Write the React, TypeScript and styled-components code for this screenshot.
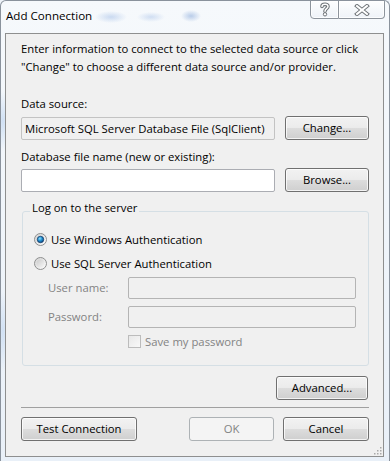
import styled, { createGlobalStyle } from "styled-components";

const GlobalStyle = createGlobalStyle`
  html, body {
    margin: 0;
    padding: 0;
    background: #eef3f9;
  }
  body {
    font-family: "Open Sans", "Noto Sans", sans-serif;
    font-size: 11.3px;
    color: #000;
  }
`;

const Frame = styled.div`
  width: 390px;
  height: 461px;
  box-sizing: border-box;
  overflow: hidden;
  border: 1px solid #8a929c;
  border-bottom: none;
  border-radius: 6px 6px 0 0;
  background:
    radial-gradient(ellipse 16px 6px at 110px 16px, rgba(120, 160, 220, 0.35), transparent),
    radial-gradient(ellipse 14px 5px at 150px 16px, rgba(120, 160, 220, 0.3), transparent),
    radial-gradient(ellipse 10px 6px at 190px 15px, rgba(110, 150, 210, 0.45), transparent),
    radial-gradient(ellipse 8px 30px at 2px 120px, rgba(140, 180, 230, 0.35), transparent),
    radial-gradient(ellipse 6px 40px at 2px 330px, rgba(140, 180, 230, 0.3), transparent),
    linear-gradient(#f6f9fc, #e9f0f8);
  display: flex;
  flex-direction: column;
`;

const TitleBar = styled.div`
  height: 32px;
  display: flex;
  align-items: flex-start;
  justify-content: space-between;
`;

const Title = styled.div`
  margin: 6px 0 0 5px;
  line-height: 18px;
  font-size: 11.6px;
  text-shadow: 0 0 6px #fff, 0 0 3px #fff;
`;

const CaptionButtons = styled.div`
  display: flex;
  margin: -1px 4px 0 0;
`;

const CaptionButton = styled.div<{ $wide?: boolean; $last?: boolean }>`
  width: ${(p) => (p.$wide ? 46 : 29)}px;
  height: 19px;
  box-sizing: border-box;
  border: 1px solid #8d949c;
  border-left: ${(p) => (p.$last ? "none" : "1px solid #8d949c")};
  border-radius: ${(p) => (p.$last ? "0 0 4px 0" : "0 0 0 4px")};
  background: linear-gradient(rgba(255, 255, 255, 0.85), rgba(235, 240, 246, 0.7));
  box-shadow: inset 0 0 0 1px rgba(255, 255, 255, 0.8);
  display: flex;
  align-items: center;
  justify-content: center;
`;

const Client = styled.div`
  position: relative;
  margin: 0 5px 0 4px;
  height: 424px;
  box-sizing: border-box;
  border: 1px solid #8e8f8f;
  background: #f0f0f0;
  padding: 6px 14px 0 15px;
  display: flex;
  flex-direction: column;
`;

const Text = styled.div<{ $top?: number; $muted?: boolean }>`
  line-height: 18px;
  margin-top: ${(p) => p.$top ?? 0}px;
  color: ${(p) => (p.$muted ? "#838383" : "#000")};
  white-space: nowrap;
`;

const FieldRow = styled.div<{ $top: number }>`
  display: flex;
  align-items: center;
  gap: 10px;
  margin-top: ${(p) => p.$top}px;
`;

const Field = styled.div<{ $variant?: "readonly" | "edit" | "disabled" }>`
  flex: 1;
  min-width: 0;
  height: ${(p) => (p.$variant === "disabled" ? 22 : 23)}px;
  box-sizing: border-box;
  border: 1px solid
    ${(p) => (p.$variant === "edit" ? "#abadb3" : p.$variant === "disabled" ? "#b4b4b4" : "#c3c3c3")};
  border-radius: 2px;
  background: ${(p) => (p.$variant === "edit" ? "#fff" : "#f0f0f0")};
  padding: 0 3px;
  line-height: 21px;
  white-space: nowrap;
  overflow: hidden;
`;

const Button = styled.div<{ $width: number; $disabled?: boolean }>`
  width: ${(p) => p.$width}px;
  height: 24px;
  box-sizing: border-box;
  flex: none;
  border: 1px solid ${(p) => (p.$disabled ? "#adb2b5" : "#707070")};
  border-radius: 3px;
  background: ${(p) =>
    p.$disabled
      ? "#f4f4f4"
      : "linear-gradient(#f2f2f2 0%, #ebebeb 50%, #dddddd 50%, #cfcfcf 100%)"};
  box-shadow: inset 0 0 0 1px ${(p) => (p.$disabled ? "#f4f4f4" : "rgba(255,255,255,0.75)")};
  color: ${(p) => (p.$disabled ? "#838383" : "#000")};
  display: flex;
  align-items: center;
  justify-content: center;
  line-height: 18px;
`;

const Group = styled.div`
  margin-top: 19px;
  margin-left: 1px;
  border: 1px solid #d5dfe5;
  border-radius: 3px;
  padding: 0 12px 15px 11px;
  display: flex;
  flex-direction: column;
`;

const GroupTitle = styled.div`
  align-self: flex-start;
  margin: -13px 0 0 -4px;
  padding: 0 2px;
  line-height: 18px;
  background: #f0f0f0;
`;

const OptionRow = styled.div<{ $top: number; $indent?: number; $muted?: boolean }>`
  display: flex;
  align-items: center;
  gap: 4px;
  height: 18px;
  margin-top: ${(p) => p.$top}px;
  margin-left: ${(p) => p.$indent ?? 0}px;
  color: ${(p) => (p.$muted ? "#838383" : "#000")};
`;

const CredRow = styled.div<{ $top: number }>`
  display: flex;
  align-items: center;
  margin-top: ${(p) => p.$top}px;
  margin-left: 14px;
  color: #838383;
`;

const CredLabel = styled.div`
  width: 80px;
  flex: none;
  line-height: 18px;
`;

const RightRow = styled.div<{ $top: number }>`
  display: flex;
  justify-content: flex-end;
  margin-top: ${(p) => p.$top}px;
  padding-right: 1px;
`;

const Separator = styled.div`
  margin-top: 7px;
  height: 1px;
  background: #a0a0a0;
`;

const ButtonBar = styled.div`
  display: flex;
  align-items: center;
  margin-top: 9px;
  gap: 9px;
`;

const Spacer = styled.div`
  flex: 1;
`;

const Grip = styled.svg`
  position: absolute;
  right: 1px;
  bottom: 1px;
`;

const HelpGlyph = () => (
  <svg width="12" height="15" viewBox="0 0 12 15">
    <g fill="none" strokeLinecap="round" strokeLinejoin="round">
      <path d="M3 4.5 C3 1.6 9 1.6 9 4.5 C9 6.6 6 6.8 6 9.2" stroke="#6f7478" strokeWidth="3.6" />
      <path d="M3 4.5 C3 1.6 9 1.6 9 4.5 C9 6.6 6 6.8 6 9.2" stroke="#fff" strokeWidth="1.5" />
    </g>
    <circle cx="6" cy="12.3" r="1.7" fill="#fff" stroke="#6f7478" strokeWidth="1" />
  </svg>
);

const CloseGlyph = () => (
  <svg width="16" height="12" viewBox="0 0 16 12">
    <g strokeLinecap="square">
      <path d="M3 2 L13 10 M13 2 L3 10" stroke="#6f7478" strokeWidth="4" />
      <path d="M3 2 L13 10 M13 2 L3 10" stroke="#fff" strokeWidth="2" />
    </g>
  </svg>
);

const Radio = ({ checked }: { checked?: boolean }) => (
  <svg width="13" height="13" viewBox="0 0 13 13">
    <defs>
      <linearGradient id="rOuter" x1="0" y1="0" x2="1" y2="1">
        <stop offset="0" stopColor="#d2d2d2" />
        <stop offset="1" stopColor="#ffffff" />
      </linearGradient>
      <linearGradient id="rInner" x1="0" y1="0" x2="1" y2="1">
        <stop offset="0" stopColor="#cbcbcb" />
        <stop offset="1" stopColor="#f7f7f7" />
      </linearGradient>
      <radialGradient id="rDot" cx="0.4" cy="0.35" r="0.7">
        <stop offset="0" stopColor="#8fe0ff" />
        <stop offset="0.5" stopColor="#1f8fd0" />
        <stop offset="1" stopColor="#0b3f78" />
      </radialGradient>
    </defs>
    <circle cx="6.5" cy="6.5" r="6" fill="url(#rOuter)" stroke="#8e8f8f" strokeWidth="1" />
    <circle cx="6.5" cy="6.5" r="4" fill="url(#rInner)" />
    {checked && <circle cx="6.5" cy="6.5" r="3.2" fill="url(#rDot)" stroke="#153c6a" strokeWidth="0.8" />}
  </svg>
);

const CheckBox = styled.div`
  width: 13px;
  height: 13px;
  box-sizing: border-box;
  border: 1px solid #bcbcbc;
  background: linear-gradient(135deg, #e8e8e8, #f8f8f8);
  flex: none;
`;

export default function App() {
  return (
    <>
      <GlobalStyle />
      <Frame>
        <TitleBar>
          <Title>Add Connection</Title>
          <CaptionButtons>
            <CaptionButton>
              <HelpGlyph />
            </CaptionButton>
            <CaptionButton $wide $last>
              <CloseGlyph />
            </CaptionButton>
          </CaptionButtons>
        </TitleBar>
        <Client>
          <Text>
            Enter information to connect to the selected data source or click
            <br />
            "Change" to choose a different data source and/or provider.
          </Text>
          <Text $top={19}>Data source:</Text>
          <FieldRow $top={3}>
            <Field $variant="readonly">Microsoft SQL Server Database File (SqlClient)</Field>
            <Button $width={84}>Change...</Button>
          </FieldRow>
          <Text $top={8}>Database file name (new or existing):</Text>
          <FieldRow $top={2}>
            <Field $variant="edit" />
            <Button $width={84}>Browse...</Button>
          </FieldRow>
          <Group>
            <GroupTitle>Log on to the server</GroupTitle>
            <OptionRow $top={13}>
              <Radio checked />
              <span>Use Windows Authentication</span>
            </OptionRow>
            <OptionRow $top={6}>
              <Radio />
              <span>Use SQL Server Authentication</span>
            </OptionRow>
            <CredRow $top={5}>
              <CredLabel>User name:</CredLabel>
              <Field $variant="disabled" />
            </CredRow>
            <CredRow $top={7}>
              <CredLabel>Password:</CredLabel>
              <Field $variant="disabled" />
            </CredRow>
            <OptionRow $top={4} $indent={94} $muted>
              <CheckBox />
              <span>Save my password</span>
            </OptionRow>
          </Group>
          <RightRow $top={10}>
            <Button $width={92}>Advanced...</Button>
          </RightRow>
          <Separator />
          <ButtonBar>
            <Button $width={116}>Test Connection</Button>
            <Spacer />
            <Button $width={85} $disabled>
              OK
            </Button>
            <Button $width={86}>Cancel</Button>
          </ButtonBar>
          <Grip width="8" height="8" viewBox="0 0 8 8">
            {[
              [6, 0],
              [6, 3],
              [3, 3],
              [6, 6],
              [3, 6],
              [0, 6],
            ].map(([x, y]) => (
              <rect key={`${x}-${y}`} x={x} y={y} width="1.5" height="1.5" fill="#a9a9a9" />
            ))}
          </Grip>
        </Client>
      </Frame>
    </>
  );
}
